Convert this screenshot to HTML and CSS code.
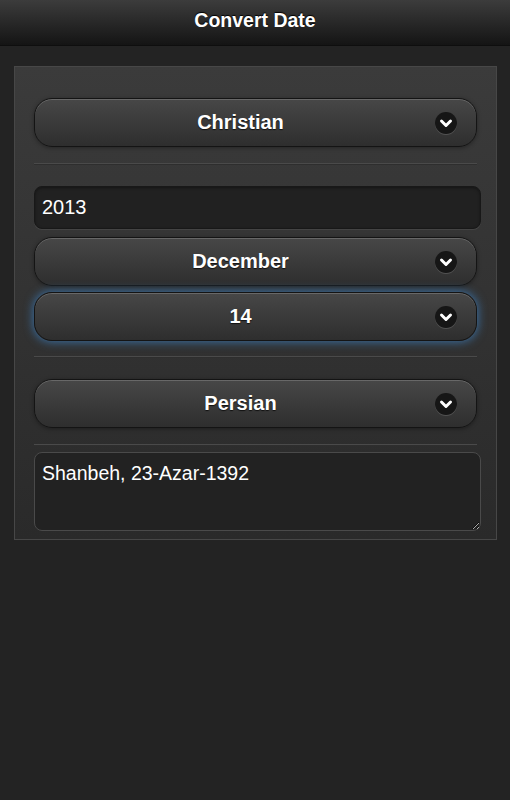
FILE: index.html
```
<!DOCTYPE html>
<html>
<head>
<meta charset="utf-8">
<link rel="stylesheet" href="styles.css">
</head>
<body>
<header class="bar"><h1 class="title">Convert Date</h1></header>
<main class="panel">
  <div class="sel"><span class="sel-text">Christian</span><span class="ico"><svg viewBox="0 0 22 22" width="22" height="22"><path d="M6.5 9 L11 13.5 L15.5 9" fill="none" stroke="#fff" stroke-width="3" stroke-linecap="round" stroke-linejoin="round"/></svg></span></div>
  <div class="divider div-a"></div>
  <div class="input">2013</div>
  <div class="sel sel-dec"><span class="sel-text">December</span><span class="ico"><svg viewBox="0 0 22 22" width="22" height="22"><path d="M6.5 9 L11 13.5 L15.5 9" fill="none" stroke="#fff" stroke-width="3" stroke-linecap="round" stroke-linejoin="round"/></svg></span></div>
  <div class="sel sel-day focus"><span class="sel-text">14</span><span class="ico"><svg viewBox="0 0 22 22" width="22" height="22"><path d="M6.5 9 L11 13.5 L15.5 9" fill="none" stroke="#fff" stroke-width="3" stroke-linecap="round" stroke-linejoin="round"/></svg></span></div>
  <div class="divider div-b"></div>
  <div class="sel"><span class="sel-text">Persian</span><span class="ico"><svg viewBox="0 0 22 22" width="22" height="22"><path d="M6.5 9 L11 13.5 L15.5 9" fill="none" stroke="#fff" stroke-width="3" stroke-linecap="round" stroke-linejoin="round"/></svg></span></div>
  <div class="divider div-c"></div>
  <textarea class="area">Shanbeh, 23-Azar-1392</textarea>
</main>
</body>
</html>
```
FILE: styles.css
```
html, body {
  margin: 0;
  padding: 0;
  background: #232323;
  font-family: "Liberation Sans", Arial, sans-serif;
  color: #fff;
}
.bar {
  height: 46px;
  background: linear-gradient(#3c3c3c, #141414);
  border-bottom: 1px solid #0e0e0e;
  box-sizing: border-box;
  display: flex;
  align-items: center;
  justify-content: center;
}
.title {
  margin: 0 0 4px 0;
  font-size: 19.5px;
  font-weight: bold;
  color: #fff;
  text-shadow: 0 -1px 1px #000;
}
.panel {
  margin: 20px 13px 0 14px;
  border: 1px solid #474747;
  background: linear-gradient(#3b3b3b, #2a2a2a);
  padding: 31px 15px 8px 19px;
  display: flex;
  flex-direction: column;
}
.sel {
  height: 49px;
  box-sizing: border-box;
  margin-right: 4px;
  border: 1px solid #141414;
  border-radius: 18px;
  background: linear-gradient(#474747, #2e2e2e);
  box-shadow: inset 0 1px 0 rgba(255,255,255,0.18), 0 1px 4px rgba(0,0,0,0.35);
  display: flex;
  align-items: center;
  padding: 0 19px 0 15px;
}
.sel-text {
  flex: 1;
  text-align: center;
  font-size: 20px;
  font-weight: bold;
  color: #fff;
  text-shadow: 0 1px 1px #111;
  margin-right: 4px;
}
.ico {
  width: 22px;
  height: 22px;
  border-radius: 50%;
  background: #161616;
  box-shadow: 0 1px 0 rgba(255,255,255,0.15);
  display: flex;
}
.sel-dec { margin-top: 8px; }
.sel-day { margin-top: 6px; }
.focus {
  box-shadow: inset 0 1px 0 rgba(255,255,255,0.18), 0 0 10px 1px #3a6ea0;
}
.divider {
  height: 1px;
  background: #4a4a4a;
  border-bottom: 1px solid #2e2e2e;
  margin-right: 4px;
}
.div-a { margin-top: 16px; margin-bottom: 21px; }
.div-b { margin-top: 15px; margin-bottom: 21px; }
.div-c { margin-top: 16px; margin-bottom: 6px; }
.input {
  height: 43px;
  box-sizing: border-box;
  border: 1px solid #181818;
  border-radius: 8px;
  background: #212121;
  box-shadow: inset 0 1px 3px rgba(0,0,0,0.4), 0 1px 0 rgba(255,255,255,0.08);
  font-size: 20px;
  color: #fff;
  padding: 0 7px;
  display: flex;
  align-items: center;
}
.area {
  display: block;
  height: 79px;
  box-sizing: border-box;
  width: 100%;
  margin: 0;
  border: 1px solid #4a4a4a;
  border-radius: 8px;
  background: #222;
  color: #fff;
  font-family: "Liberation Sans", Arial, sans-serif;
  font-size: 19.5px;
  padding: 9px 7px;
  outline: none;
}
```
